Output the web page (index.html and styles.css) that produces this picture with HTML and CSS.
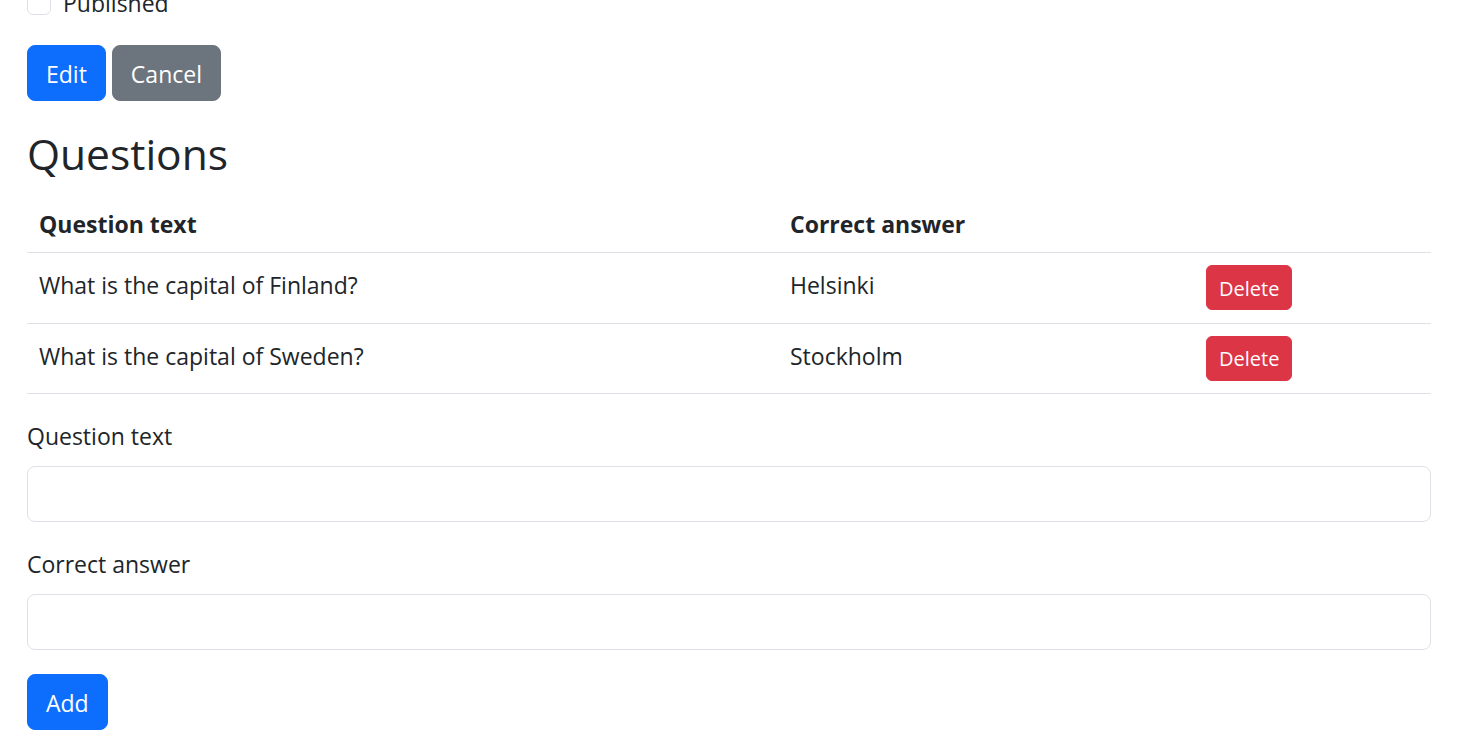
FILE: index.html
```html
<!DOCTYPE html>
<html lang="en">
<head>
<meta charset="utf-8">
<title>Quiz</title>
<link rel="stylesheet" href="styles.css">
</head>
<body>
<div class="page">
  <div class="form-check">
    <input class="check-input" type="checkbox" id="published">
    <label class="check-label" for="published">Published</label>
  </div>
  <div class="actions">
    <button class="btn btn-primary" type="button">Edit</button>
    <button class="btn btn-secondary" type="button">Cancel</button>
  </div>
  <h2 class="heading">Questions</h2>
  <table class="table">
    <colgroup>
      <col class="col-q">
      <col class="col-a">
      <col class="col-x">
    </colgroup>
    <thead>
      <tr>
        <th>Question text</th>
        <th>Correct answer</th>
        <th></th>
      </tr>
    </thead>
    <tbody>
      <tr>
        <td>What is the capital of Finland?</td>
        <td>Helsinki</td>
        <td><button class="btn btn-sm btn-danger" type="button">Delete</button></td>
      </tr>
      <tr>
        <td>What is the capital of Sweden?</td>
        <td>Stockholm</td>
        <td><button class="btn btn-sm btn-danger" type="button">Delete</button></td>
      </tr>
    </tbody>
  </table>
  <form class="add-form">
    <div class="field">
      <label class="form-label" for="qtext">Question text</label>
      <input class="form-control" id="qtext" type="text">
    </div>
    <div class="field">
      <label class="form-label" for="qans">Correct answer</label>
      <input class="form-control" id="qans" type="text">
    </div>
    <button class="btn btn-primary" type="button">Add</button>
  </form>
</div>
</body>
</html>
```

FILE: styles.css
```css
* { box-sizing: border-box; }
html, body { margin: 0; padding: 0; background: #fff; }
body {
  font-family: "Open Sans", "Noto Sans", sans-serif;
  font-size: 23px;
  line-height: 36px;
  color: #212529;
}
.page {
  padding: 0 30px 24px 27px;
  margin-top: -15px;
}
.form-check {
  display: flex;
  align-items: flex-start;
  height: 36px;
  margin-bottom: 24px;
}
.check-input {
  appearance: none;
  -webkit-appearance: none;
  width: 24px;
  height: 24px;
  margin: 6px 12px 0 0;
  border: 1.5px solid #dee2e6;
  border-radius: 6px;
  background: #fff;
}
.check-label { font-size: 23px; }
.actions {
  display: flex;
  gap: 6px;
  margin-bottom: 24px;
}
.btn {
  font-family: inherit;
  font-size: 23px;
  line-height: 36px;
  height: 56px;
  padding: 2px 18px 0;
  border: 1px solid transparent;
  border-radius: 8px;
  color: #fff;
  cursor: pointer;
}
.btn-primary { background: #0d6efd; border-color: #0d6efd; }
.btn-secondary { background: #6c757d; border-color: #6c757d; }
.btn-danger { background: #dc3545; border-color: #dc3545; }
.btn-sm {
  font-size: 20px;
  height: 45px;
  line-height: 30px;
  padding: 2px 12px 0;
  border-radius: 6px;
}
.heading {
  margin: 0 0 7px 0;
  font-size: 42.5px;
  line-height: 57px;
  font-weight: 400;
}
.table {
  width: 100%;
  border-collapse: collapse;
  margin-bottom: 24px;
  table-layout: fixed;
}
.col-q { width: 751px; }
.col-a { width: 416px; }
.table th, .table td {
  text-align: left;
  vertical-align: top;
  padding: 12px;
  border-bottom: 1px solid #dee2e6;
}
.table th { font-weight: 700; height: 63px; padding-top: 17px; padding-bottom: 10px; }
.table td { height: 70.5px; padding-top: 14px; }
.table td:last-child { padding-top: 12px; }
.add-form { display: flex; flex-direction: column; align-items: flex-start; }
.field { width: 100%; margin-bottom: 24px; display: flex; flex-direction: column; }
.form-label { margin-bottom: 12px; }
.form-control {
  width: 100%;
  height: 56px;
  border: 1px solid #dee2e6;
  border-radius: 8px;
  font-family: inherit;
  font-size: 23px;
  padding: 0 18px;
  background: #fff;
}
```
